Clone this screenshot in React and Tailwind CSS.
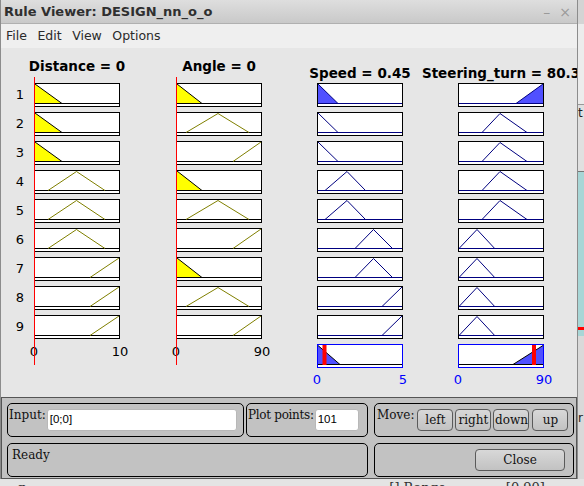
import React from "react";

const Y0 = 20.5;
const Y1 = 1.5;

// membership function outlines, in px inside an 86x24 plot box
const DIST = { L: [[1, 1], [28, Y0]], M: [[14, Y0], [42.5, Y1], [71, Y0]], R: [[56, Y0], [85, 1]] };
const ANG = { L: [[1, 1], [26, Y0]], M: [[10, Y0], [42, Y1], [73, Y0]], R: [[57, Y0], [85, 1]] };
const SPD = { A: [[1, 1], [21, Y0]], B: [[8, Y0], [30, Y1], [48.5, Y0]], C: [[38, Y0], [56.5, Y1], [75.5, Y0]], D: [[65, Y0], [85, 1]] };
const STR = { R: [[58, Y0], [85, 1]], M: [[24, Y0], [42, Y1], [69, Y0]], L: [[1, Y0], [19, Y1], [36.7, Y0]] };

const distRows = ["L", "L", "L", "M", "M", "M", "R", "R", "R"];
const angRows = ["L", "M", "R", "L", "M", "R", "L", "M", "R"];
const spdRows = ["A", "A", "A", "B", "B", "C", "C", "D", "D"];
const strRows = ["R", "M", "M", "M", "M", "L", "L", "L", "L"];

function pts(a) {
  return a.map((p) => p.join(",")).join(" ");
}

function closeShape(s) {
  // shoulder shapes get filled down to the axis
  const first = s[0];
  const last = s[s.length - 1];
  if (first[1] < last[1]) return [...s, [first[0], Y0]];
  return [...s, [last[0], Y0]];
}

function Plot({ shape, line, axis, fillColor, filled, agg, bar }) {
  const edge = filled ? (agg || line === "#808000" ? "#000" : line) : line;
  return (
    <svg width="86" height="24" className="block">
      <rect x="0" y="0" width="86" height="24" fill="#fff" />
      {filled && <polygon points={pts(closeShape(shape))} fill={fillColor} />}
      <line x1="1" y1="20.5" x2="85" y2="20.5" stroke={axis} shapeRendering="crispEdges" />
      <polyline points={pts(shape)} fill="none" stroke={edge} strokeWidth="1" />
      {bar != null && <rect x={bar} y="1" width="4" height="20" fill="#ff0000" />}
      <rect x="0.5" y="0.5" width="85" height="23" fill="none" stroke={agg ? "#0000ff" : "#000"} shapeRendering="crispEdges" />
    </svg>
  );
}

function Column({ title, out, plots, labels, className }) {
  return (
    <div className={`relative w-[86px] flex flex-col shrink-0 ${className || ""}`}>
      <div className={`h-[35px] flex justify-center ${out ? "pt-[17px]" : "pt-[10px]"}`}>
        <span className="whitespace-nowrap font-bold text-[13.5px] leading-[16px] text-black">{title}</span>
      </div>
      <div className="flex flex-col gap-[5px]">
        {plots.map((p, i) => <Plot key={i} {...p} />)}
      </div>
      <div className={`flex justify-between text-[13px] leading-[14px] ${out ? "mt-[5px] text-[#0000ff]" : "mt-[6px] text-black"}`}>
        <div className="w-0 flex justify-center">{labels[0]}</div>
        <div className="w-0 flex justify-center">{labels[1]}</div>
      </div>
      {!out && <div className="absolute left-0 top-[29px] w-px h-[288px] bg-[#ff0000] z-10" />}
    </div>
  );
}

function Field({ value, className }) {
  return (
    <div className={`h-[22px] bg-white rounded-[3px] border border-[#b8b8b8] flex items-center pl-[2px] font-['Liberation_Sans',sans-serif] text-[11.5px] text-black ${className}`}>
      {value}
    </div>
  );
}

function Btn({ label, className }) {
  return (
    <div className={`h-[22px] rounded-[4px] border border-[#5a5a5a] bg-gradient-to-b from-[#d8d8d8] to-[#c2c2c2] flex items-center justify-center leading-[14px] ${className}`}>
      {label}
    </div>
  );
}

export default function App() {
  const inp = { line: "#808000", axis: "#000", fillColor: "#ffff00" };
  const outp = { line: "#000080", axis: "#000080", fillColor: "#5050ff" };

  const distPlots = distRows.map((k, i) => ({ ...inp, shape: DIST[k], filled: i < 3 }));
  const angPlots = angRows.map((k) => ({ ...inp, shape: ANG[k], filled: k === "L" }));
  const spdPlots = [
    ...spdRows.map((k, i) => ({ ...outp, shape: SPD[k], filled: i === 0 })),
    { ...outp, axis: "#000", shape: [[1, 1.5], [23, Y0]], filled: true, agg: true, bar: 5.5 },
  ];
  const strPlots = [
    ...strRows.map((k, i) => ({ ...outp, shape: STR[k], filled: i === 0 })),
    { ...outp, axis: "#000", shape: [[55, Y0], [85, 1.5]], filled: true, agg: true, bar: 74 },
  ];

  return (
    <div className="w-[584px] h-[486px] overflow-hidden flex flex-col bg-[#dcdcdc] font-['DejaVu_Sans',sans-serif]">
      <div className="flex h-[479px]">
        {/* the Rule Viewer window */}
        <div className="w-[578px] h-[479px] flex flex-col border-l border-r border-[#8c8c8c] shrink-0">
          <div className="h-[24px] flex items-center justify-between bg-gradient-to-b from-[#dedede] to-[#c9c9c9] border-b border-[#b0b0b0] pl-[3px] pr-[6px]">
            <span className="font-bold text-[13px] text-[#2f2f2f] leading-none">Rule Viewer: DESIGN_nn_o_o</span>
            <div className="flex items-center gap-[9px] text-[#9a9a9a] text-[14px] leading-none">
              <span>–</span>
              <span>×</span>
            </div>
          </div>
          <div className="h-[24px] flex items-center gap-[10.5px] bg-[#efefef] pl-[5px] text-[12.5px] text-[#2a2a2a]">
            <span>File</span>
            <span>Edit</span>
            <span>View</span>
            <span>Options</span>
          </div>

          <div className="h-[349px] bg-[#e6e6e6] flex overflow-hidden">
            <div className="w-[33px] shrink-0 flex flex-col">
              <div className="h-[35px]" />
              <div className="flex flex-col gap-[5px]">
                {[1, 2, 3, 4, 5, 6, 7, 8, 9].map((n) => (
                  <div key={n} className="h-[24px] flex items-center justify-center pl-[5px] text-[13px] text-black">{n}</div>
                ))}
              </div>
            </div>
            <Column title="Distance = 0" plots={distPlots} labels={["0", "10"]} />
            <Column title="Angle = 0" plots={angPlots} labels={["0", "90"]} className="ml-[56px]" />
            <Column title="Speed = 0.45" out plots={spdPlots} labels={["0", "5"]} className="ml-[55px]" />
            <Column title="Steering_turn = 80.3" out plots={strPlots} labels={["0", "90"]} className="ml-[55px]" />
          </div>

          <div className="flex-1 bg-[#c2c2c2] border border-[#555] pt-[5px] pl-[5px] font-['DejaVu_Serif',serif] text-[12px] text-[#111] flex flex-col gap-[6px]">
            <div className="flex">
              <div className="w-[237px] h-[34px] rounded-[5px] border border-black flex items-start pl-[1px]">
                <span className="pt-[4px] leading-[14px]">Input:</span>
                <Field value="[0;0]" className="w-[190px] mt-[5px] ml-[1px]" />
              </div>
              <div className="w-[122px] h-[34px] ml-[2px] rounded-[5px] border border-black flex items-start pl-[1px]">
                <span className="pt-[4px] leading-[14px] whitespace-nowrap tracking-[-0.3px]">Plot points:</span>
                <Field value="101" className="w-[44px] mt-[5px] ml-[1px]" />
              </div>
              <div className="w-[200px] h-[34px] ml-[6px] rounded-[5px] border border-black flex items-start pl-[2px]">
                <span className="pt-[4px] leading-[14px]">Move:</span>
                <Btn label="left" className="w-[36px] mt-[5px] ml-[3px]" />
                <Btn label="right" className="w-[36px] mt-[5px] ml-[2px]" />
                <Btn label="down" className="w-[36px] mt-[5px] ml-[2px]" />
                <Btn label="up" className="w-[36px] mt-[5px] ml-[3px]" />
              </div>
            </div>
            <div className="flex">
              <div className="w-[361px] h-[34px] rounded-[5px] border border-black pl-[4px] pt-[4px] leading-[14px]">Ready</div>
              <div className="w-[200px] h-[34px] ml-[6px] rounded-[5px] border border-black flex justify-end items-start pr-[8px]">
                <Btn label="Close" className="w-[90px] mt-[5px]" />
              </div>
            </div>
          </div>
        </div>

        {/* sliver of the window behind */}
        <div className="flex-1 flex flex-col overflow-hidden font-['DejaVu_Sans',sans-serif] text-[12px] text-[#222]">
          <div className="h-[24px] bg-[#d4d4d4]" />
          <div className="h-[80px] bg-[#ececec]" />
          <div className="h-[67px] bg-[#e0e0e0] border-t border-[#999] pt-[2px] leading-[12px]">t</div>
          <div className="h-[165px] bg-[#a8d6d6] border-t border-[#777] flex flex-col justify-end pb-[6px]">
            <div className="h-[3px] w-full bg-[#ff0000]" />
          </div>
          <div className="flex-1 bg-[#d9d9d9] pt-[76px] leading-[12px]">r</div>
        </div>
      </div>

      {/* desktop under the window */}
      <div className="flex-1 bg-[#e4e4e4] flex items-start pt-[2px] font-['DejaVu_Serif',serif] text-[13px] text-[#333] leading-[14px] overflow-hidden">
        <span className="ml-[17px]">g</span>
        <span className="ml-[364px]">[] Range</span>
        <span className="ml-[60px]">[0 90]</span>
      </div>
    </div>
  );
}
